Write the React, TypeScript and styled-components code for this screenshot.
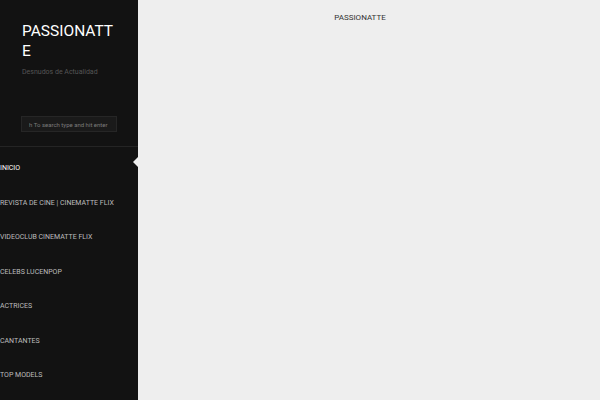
import React from 'react';
import styled, { createGlobalStyle } from 'styled-components';

const GlobalStyle = createGlobalStyle`
    html, body {
        margin: 0;
        padding: 0;
        height: 100%;
        background: #eeeeee;
        font-family: Roboto, "Liberation Sans", sans-serif;
    }
    * {
        box-sizing: border-box;
    }
`;

// Whole page: dark sidebar on the left, content on the right
const Page = styled.div`
    display: grid;
    grid-template-columns: 138px 1fr;
    height: 100vh;
    overflow: hidden;
`;

const Sidebar = styled.aside`
    background: #121212;
    display: flex;
    flex-direction: column;
`;

const Brand = styled.div`
    padding: 21px 22px 0 22px;
`;

const SiteTitle = styled.h1`
    margin: 0;
    font-size: 15.5px;
    line-height: 20px;
    font-weight: 400;
    color: #ffffff;
    word-break: break-all;
`;

const Tagline = styled.p`
    margin: 6px 0 0;
    font-size: 7px;
    line-height: 10px;
    color: #555555;
`;

const SearchBox = styled.input`
    display: block;
    margin: 39px 0 0 -1px;
    width: 96px;
    height: 16px;
    padding: 0 4px 0 7px;
    background: #1a1a1a;
    border: 1px solid #262626;
    color: #999;
    font-family: Roboto, "Liberation Sans", sans-serif;
    font-size: 6px;
    outline: none;
    &::placeholder {
        color: #7a7a7a;
    }
`;

const Divider = styled.hr`
    margin: 14px 0 0;
    border: none;
    border-top: 1px solid #242424;
`;

const MenuUl = styled.ul`
    list-style: none;
    margin: 0;
    padding: 4px 0 0;
`;

const MenuLi = styled.li<{ $active?: boolean }>`
    position: relative;
    height: 34.5px;
    line-height: 34.5px;
    font-size: 7px;
    text-transform: uppercase;
    color: ${props => props.$active ? '#ffffff' : '#bdbdbd'};
    white-space: nowrap;
    &::after {
        content: '';
        display: ${props => props.$active ? 'block' : 'none'};
        position: absolute;
        right: 0;
        top: 6px;
        border-style: solid;
        border-width: 5px 5px 5px 0;
        border-color: transparent #eeeeee transparent transparent;
    }
`;

const Main = styled.main`
    background: #eeeeee;
`;

const TopTitle = styled.header`
    margin-right: 18px;
    padding-top: 12px;
    text-align: center;
    font-size: 8px;
    line-height: 11px;
    color: #333333;
`;

const menuItems = [
    'Inicio',
    'Revista de Cine | Cinematte Flix',
    'Videoclub Cinematte Flix',
    'Celebs LucenPop',
    'Actrices',
    'Cantantes',
    'Top Models',
];

const App = () => {
    return (
        <>
            <GlobalStyle />
            <Page>
                <Sidebar>
                    <Brand>
                        <SiteTitle>PASSIONATTE</SiteTitle>
                        <Tagline>Desnudos de Actualidad</Tagline>
                        <SearchBox placeholder="h To search type and hit enter" />
                    </Brand>
                    <Divider />
                    <MenuUl>
                        {menuItems.map((item, i) => (
                            <MenuLi key={item} $active={i === 0}>{item}</MenuLi>
                        ))}
                    </MenuUl>
                </Sidebar>
                <Main>
                    <TopTitle>PASSIONATTE</TopTitle>
                </Main>
            </Page>
        </>
    );
};

export default App;
